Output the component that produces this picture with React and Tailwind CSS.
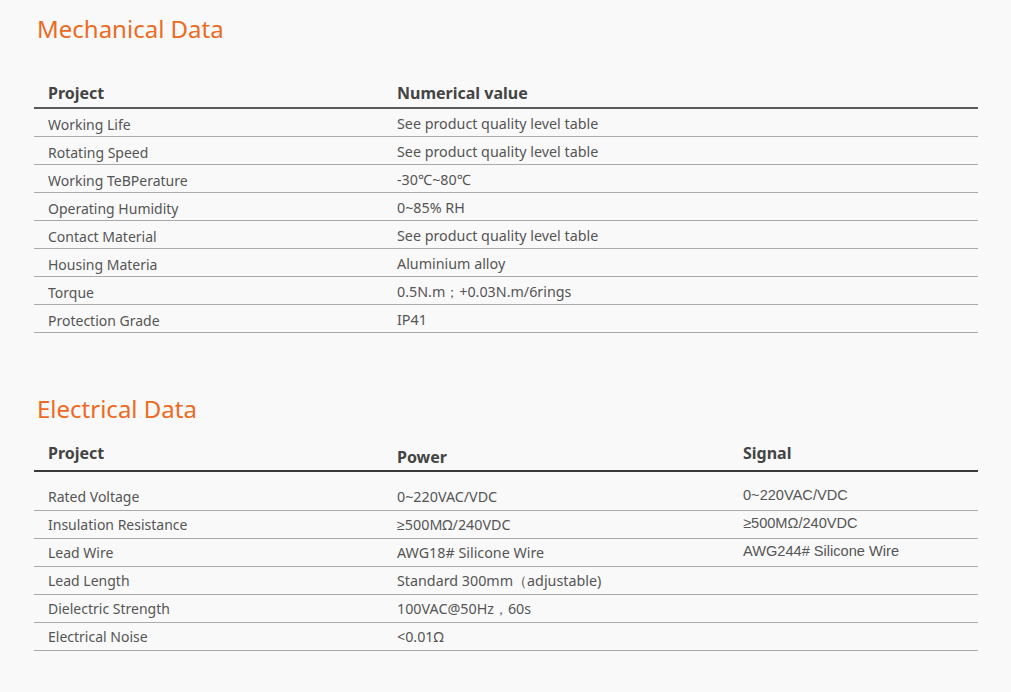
const mechanical = [
  ["Working Life", "See product quality level table"],
  ["Rotating Speed", "See product quality level table"],
  ["Working TeBPerature", "-30℃~80℃"],
  ["Operating Humidity", "0~85% RH"],
  ["Contact Material", "See product quality level table"],
  ["Housing Materia", "Aluminium alloy"],
  ["Torque", "0.5N.m；+0.03N.m/6rings"],
  ["Protection Grade", "IP41"],
];

const electrical = [
  ["Rated Voltage", "0~220VAC/VDC", "0~220VAC/VDC"],
  ["Insulation Resistance", "≥500MΩ/240VDC", "≥500MΩ/240VDC"],
  ["Lead Wire", "AWG18# Silicone Wire", "AWG244# Silicone Wire"],
  ["Lead Length", "Standard 300mm（adjustable)", ""],
  ["Dielectric Strength", "100VAC@50Hz，60s", ""],
  ["Electrical Noise", "<0.01Ω", ""],
];

const body = "font-['Noto_Sans',sans-serif]";

export default function App() {
  return (
    <main
      className={`min-h-[692px] w-full bg-[#f9f9f9] text-[#555] ${body}`}
    >
      <section className="ml-[34px] w-[944px] pt-[12px]">
        <h2 className="pl-[3px] text-[24px] leading-[34px] text-[#ee6a1f]">
          Mechanical Data
        </h2>
        <div className="mt-[33px] grid h-[30px] grid-cols-[363px_1fr] items-center border-b-2 border-[#5a5a5a] text-[16px] font-bold text-[#444]">
          <div className="pl-[14px]">Project</div>
          <div>Numerical value</div>
        </div>
        {mechanical.map(([name, value]) => (
          <div
            key={name}
            className="grid h-[28px] grid-cols-[363px_1fr] items-center border-b border-[#aaa] pt-[3px] text-[14px]"
          >
            <div className="pl-[14px]">{name}</div>
            <div className="text-[14.3px]">{value}</div>
          </div>
        ))}
      </section>

      <section className="ml-[34px] w-[944px] pt-[59px]">
        <h2 className="pl-[3px] text-[24px] leading-[34px] text-[#ee6a1f]">
          Electrical Data
        </h2>
        <div className="mt-[12px] grid h-[34px] grid-cols-[363px_346px_1fr] border-b-2 border-[#3a3a3a] text-[16px] font-bold text-[#444]">
          <div className="pl-[14px] pt-[3px]">Project</div>
          <div className="pt-[7px]">Power</div>
          <div className="pt-[3px]">Signal</div>
        </div>
        {electrical.map(([name, power, signal], i) => (
          <div
            key={name}
            className={`grid grid-cols-[363px_346px_1fr] items-end border-b border-[#aaa] pb-[3px] text-[14px] ${
              i === 0 ? "h-[39px]" : "h-[28px]"
            }`}
          >
            <div className="pl-[14px]">{name}</div>
            <div className="text-[14.3px]">{power}</div>
            <div className="font-['Liberation_Sans',sans-serif] text-[14.6px]">
              {signal}
            </div>
          </div>
        ))}
      </section>
    </main>
  );
}
